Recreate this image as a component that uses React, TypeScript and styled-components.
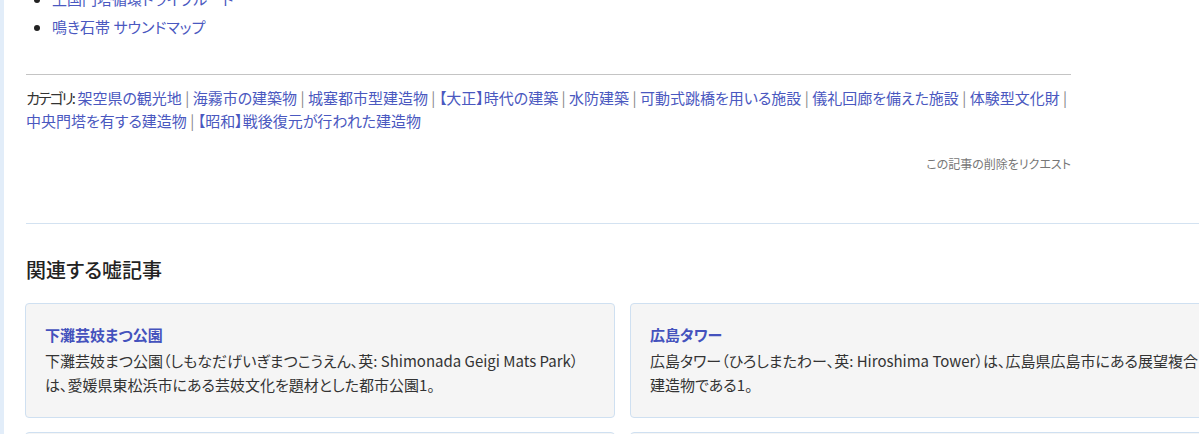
import React from 'react';
import styled, { createGlobalStyle } from 'styled-components';

const GlobalStyle = createGlobalStyle`
  html, body {
    margin: 0;
    padding: 0;
    background: #ffffff;
    overflow: hidden;
  }
  body {
    font-family: "Noto Sans CJK JP", "Noto Sans", sans-serif;
    font-feature-settings: "palt";
    color: #333333;
    height: 434px;
  }
`;

const Layout = styled.div`
  display: flex;
  height: 434px;
  overflow: hidden;
`;

const SideStrip = styled.div`
  flex: 0 0 4px;
  background: #e2edf9;
`;

const Main = styled.main`
  flex: 1;
  padding-left: 22px;
  min-width: 0;
`;

const Article = styled.div`
  width: 1045px;
`;

const LinkList = styled.ul`
  margin: -15px 0 0 0;
  padding-left: 26px;
  font-size: 15px;
  line-height: 28px;
  li::marker {
    color: #222222;
  }
`;

const Link = styled.a`
  color: #4a58c0;
  text-decoration: none;
`;

const CategoryItem = styled.span`
  white-space: nowrap;
`;

const Divider = styled.hr`
  border: none;
  border-top: 1px solid #c4c4c4;
  margin: 33px 0 0 0;
`;

const Categories = styled.div`
  margin-top: 11px;
  font-size: 15px;
  line-height: 23px;
  color: #333333;
`;

const Label = styled.span`
  letter-spacing: -2px;
`;

const Sep = styled.span`
  color: #888888;
`;

const DeleteRow = styled.div`
  margin-top: 23px;
  text-align: right;
  font-size: 12px;
  line-height: 18px;
  color: #777777;
`;

const Related = styled.section`
  margin-top: 50px;
  width: 1240px;
  border-top: 1px solid #d3e2f1;
`;

const Heading = styled.h2`
  margin: 31px 0 0 0;
  font-size: 20px;
  line-height: 30px;
  font-weight: 500;
  color: #222222;
`;

const CardGrid = styled.div`
  margin-top: 18px;
  display: grid;
  grid-template-columns: 590px 590px;
  gap: 14px 15px;
  margin-left: -1px;
`;

const Card = styled.div`
  background: #f5f5f5;
  border: 1px solid #cfe0f1;
  border-radius: 4px;
  padding: 19px 19px 20px 19px;
`;

const CardTitle = styled.a`
  display: block;
  color: #4452bd;
  font-weight: 700;
  font-size: 15px;
  line-height: 24px;
  text-decoration: none;
`;

const CardText = styled.p`
  margin: 2px 0 0 0;
  font-size: 15px;
  line-height: 24px;
  color: #333333;
`;

const categories = [
  '架空県の観光地',
  '海霧市の建築物',
  '城塞都市型建造物',
  '【大正】時代の建築',
  '水防建築',
  '可動式跳橋を用いる施設',
  '儀礼回廊を備えた施設',
  '体験型文化財',
  '中央門塔を有する建造物',
  '【昭和】戦後復元が行われた建造物',
];

const cards = [
  {
    title: '下灘芸妓まつ公園',
    text: '下灘芸妓まつ公園（しもなだげいぎまつこうえん、英: Shimonada Geigi Mats Park）は、愛媛県東松浜市にある芸妓文化を題材とした都市公園1。',
  },
  {
    title: '広島タワー',
    text: '広島タワー（ひろしまたわー、英: Hiroshima Tower）は、広島県広島市にある展望複合建造物である1。',
  },
  {
    title: '海霧城',
    text: '海霧城（かいむじょう）は、架空県海霧市にある城塞型の建造物である。',
  },
  {
    title: '霧笛塔',
    text: '霧笛塔（むてきとう）は、海霧市の港湾部に建つ塔である。',
  },
];

const App: React.FC = () => {
  return (
    <>
      <GlobalStyle />
      <Layout>
        <SideStrip />
        <Main>
          <Article>
            <LinkList>
              <li><Link href="#">王国門塔循環ドライブルート</Link></li>
              <li><Link href="#">鳴き石帯 サウンドマップ</Link></li>
            </LinkList>
            <Divider />
            <Categories>
              <Label>カテゴリ:</Label>{' '}
              {categories.map((c, i) => (
                <React.Fragment key={c}>
                  <CategoryItem>
                    <Link href="#">{c}</Link>
                    {i < categories.length - 1 && <> <Sep>|</Sep></>}
                  </CategoryItem>{' '}
                </React.Fragment>
              ))}
            </Categories>
            <DeleteRow>この記事の削除をリクエスト</DeleteRow>
          </Article>
          <Related>
            <Heading>関連する嘘記事</Heading>
            <CardGrid>
              {cards.map(card => (
                <Card key={card.title}>
                  <CardTitle href="#">{card.title}</CardTitle>
                  <CardText>{card.text}</CardText>
                </Card>
              ))}
            </CardGrid>
          </Related>
        </Main>
      </Layout>
    </>
  );
};

export default App;
